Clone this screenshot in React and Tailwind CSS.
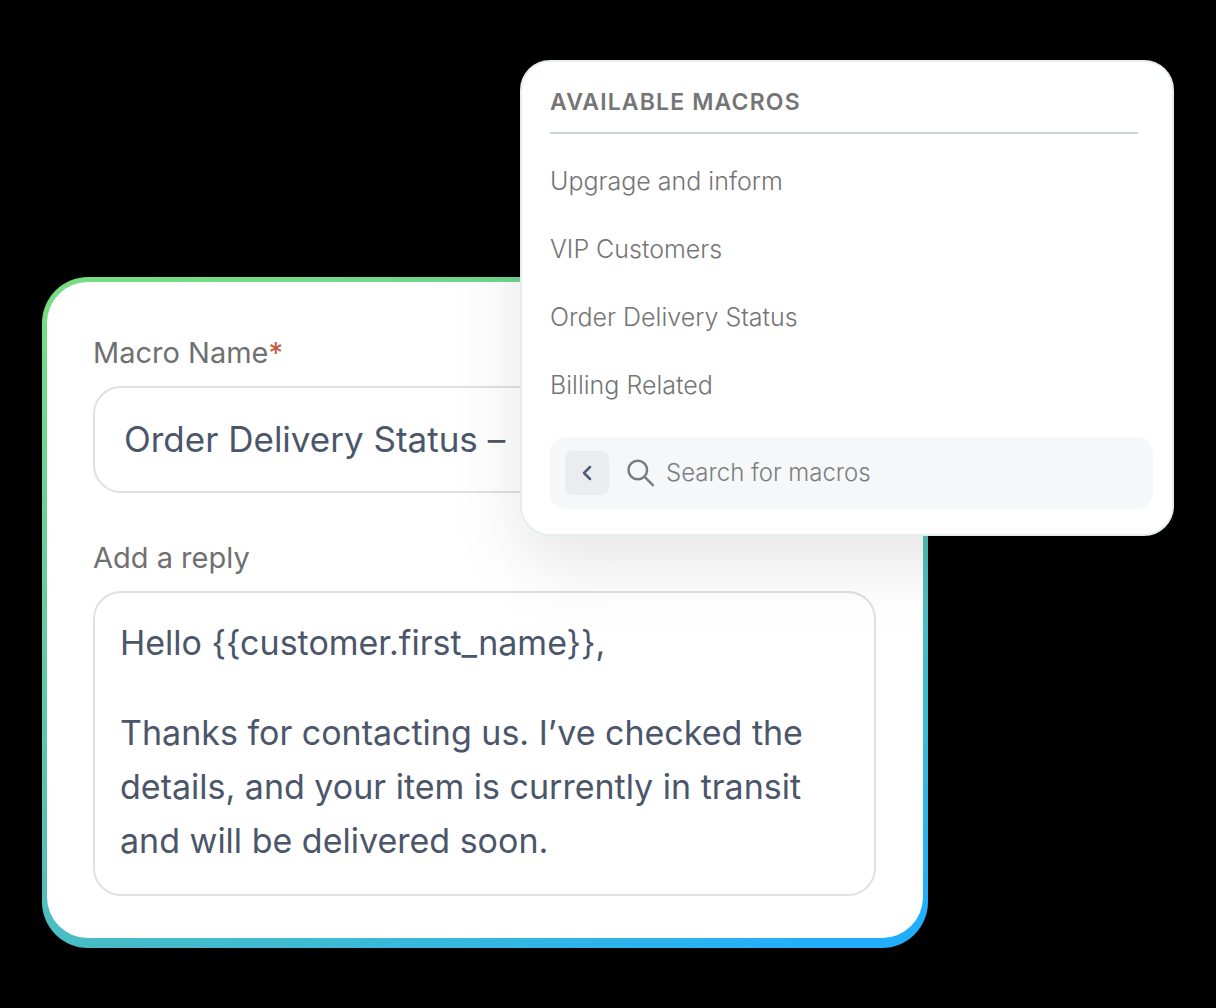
import { ChevronLeft } from 'lucide-react'

const macros = ['Upgrage and inform', 'VIP Customers', 'Order Delivery Status', 'Billing Related']

const reply = {
  greeting: 'Hello {{customer.first_name}},',
  body: 'Thanks for contacting us. I’ve checked the details, and your item is currently in transit and will be delivered soon.',
}

function SearchIcon() {
  return (
    <svg className="size-7 shrink-0 text-[#7c7c7c]" viewBox="0 0 28 28" fill="none" stroke="currentColor" strokeWidth="2.5" aria-hidden="true">
      <circle cx="10.8" cy="11" r="9.3" />
      <path d="M17.4 17.6L26.6 26.8" />
    </svg>
  )
}

function MacroForm() {
  return (
    <form className="mr-[246px] rounded-[46px] bg-linear-[160deg,#78dc82_4%,#54bfb8_60%,#3cbad6_78%,#22aefc_96%] px-[5px] pt-[5px] pb-[10px]">
      <div className="rounded-[41px] bg-white pt-[50px] pr-[47px] pb-[42px] pl-[46px]">
        <label htmlFor="macro-name" className="mb-3 block text-[29px] leading-[42px] text-[#707070]">
          Macro Name<span className="text-[#c8563a]">*</span>
        </label>
        <input
          id="macro-name"
          type="text"
          required
          defaultValue="Order Delivery Status –"
          className="mb-11 block h-[107px] w-full rounded-[28px] border-2 border-[#e0e0e0] px-[29px] pb-[2px] text-[35px] text-[#4b566b] outline-none"
        />

        <label htmlFor="reply-body" className="mb-3 block text-[29px] leading-[42px] text-[#707070]">
          Add a reply
        </label>
        <div className="flex flex-col gap-9 rounded-[28px] border-2 border-[#e0e0e0] px-[25px] pt-[23px] pb-[26px] text-[34px] leading-[54px] text-[#4b566b]">
          <input
            type="text"
            aria-label="Greeting"
            defaultValue={reply.greeting}
            className="h-[54px] w-full outline-none"
          />
          <textarea
            id="reply-body"
            rows={3}
            defaultValue={reply.body}
            className="block w-full resize-none overflow-hidden outline-none"
          />
        </div>
      </div>
    </form>
  )
}

function MacroPicker() {
  return (
    <section className="absolute top-0 right-0 left-[478px] rounded-[30px] border-2 border-[#e6edef] bg-white pt-[22px] pr-[19px] pb-[25px] pl-7 shadow-[0_28px_72px_rgba(0,0,0,0.1)]">
      <h2 className="mr-[15px] border-b-2 border-[#c9d3db] pb-3 text-[23px] leading-9 font-semibold tracking-wider text-[#757575] uppercase">
        Available macros
      </h2>
      <ul className="mt-[14px] mb-[17px]">
        {macros.map((name) => (
          <li key={name}>
            <button type="button" className="block h-[68px] w-full text-left text-[25px] font-light text-[#757575]">
              {name}
            </button>
          </li>
        ))}
      </ul>
      <div className="flex h-[72px] items-center rounded-2xl bg-[#f5f7f9] px-[15px]">
        <button type="button" aria-label="Back" className="flex size-11 shrink-0 items-center justify-center rounded-lg bg-[#ebecf0]">
          <ChevronLeft className="size-6 text-[#4d5b76]" strokeWidth={2.5} />
        </button>
        <label htmlFor="macro-search" className="mr-[11px] ml-[18px]">
          <SearchIcon />
        </label>
        <input
          id="macro-search"
          type="search"
          aria-label="Search for macros"
          placeholder="Search for macros"
          className="min-w-0 flex-1 text-[24px] font-light text-[#757575] outline-none placeholder:text-[#7c7e81]"
        />
      </div>
    </section>
  )
}

export default function App() {
  return (
    <main className="min-h-screen bg-black px-[42px] py-[60px] font-['Inter',sans-serif]">
      <div className="relative pt-[217px]">
        <MacroForm />
        <MacroPicker />
      </div>
    </main>
  )
}
